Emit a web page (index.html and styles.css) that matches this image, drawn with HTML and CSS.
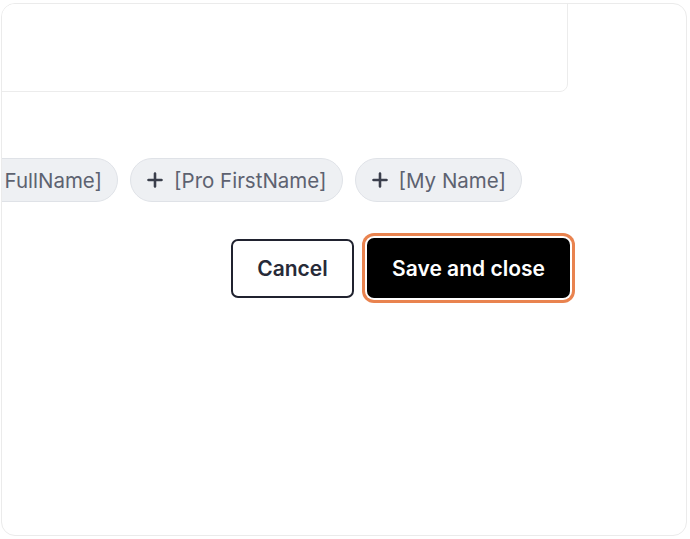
FILE: index.html
```html
<!DOCTYPE html>
<html lang="en">
<head>
<meta charset="utf-8">
<title>Edit message</title>
<link rel="stylesheet" href="styles.css">
</head>
<body>
<div class="card">
  <div class="content">
    <div class="textarea"></div>
    <div class="chips">
      <button class="chip" type="button">
        <svg class="plus" viewBox="0 0 16 16" aria-hidden="true"><path d="M8 1.5v13M1.5 8h13"/></svg>
        <span>[Pro FullName]</span>
      </button>
      <button class="chip" type="button">
        <svg class="plus" viewBox="0 0 16 16" aria-hidden="true"><path d="M8 1.5v13M1.5 8h13"/></svg>
        <span>[Pro FirstName]</span>
      </button>
      <button class="chip" type="button">
        <svg class="plus" viewBox="0 0 16 16" aria-hidden="true"><path d="M8 1.5v13M1.5 8h13"/></svg>
        <span>[My Name]</span>
      </button>
    </div>
    <div class="actions">
      <button class="btn btn-cancel" type="button">Cancel</button>
      <button class="btn btn-save" type="button">Save and close</button>
    </div>
  </div>
</div>
</body>
</html>
```
FILE: styles.css
```css
html, body {
  margin: 0;
  padding: 0;
  background: #ffffff;
}

body {
  font-family: Inter, "Noto Sans", "Liberation Sans", sans-serif;
  padding: 3px 3px 3px 1px;
}

.card {
  box-sizing: border-box;
  width: 686px;
  height: 533px;
  border: 1px solid #ebebeb;
  border-radius: 14px;
  overflow: hidden;
  background: #ffffff;
}

.content {
  display: flex;
  flex-direction: column;
  align-items: flex-end;
  padding-right: 118px;
  margin-left: -300px;
}

.textarea {
  box-sizing: border-box;
  width: 900px;
  height: 110px;
  margin-top: -22px;
  border: 1px solid #ececec;
  border-radius: 8px;
  background: #ffffff;
}

.chips {
  display: flex;
  gap: 12px;
  margin-top: 66px;
  margin-right: 46px;
  white-space: nowrap;
}

.chip {
  display: flex;
  align-items: center;
  gap: 11px;
  height: 44px;
  box-sizing: border-box;
  padding: 0 15px 0 16px;
  border: 1px solid #dfe2e7;
  border-radius: 22px;
  background: #eef0f3;
  color: #5d6270;
  font-family: inherit;
  font-size: 20.5px;
  font-weight: 400;
}

.plus {
  width: 16px;
  height: 16px;
  fill: none;
  stroke: #3b3f4c;
  stroke-width: 2.6;
  stroke-linecap: round;
}

.actions {
  display: flex;
  gap: 13px;
  margin-top: 36px;
  margin-right: -2px;
}

.btn {
  box-sizing: border-box;
  height: 60px;
  border-radius: 7px;
  font-family: inherit;
  font-size: 21px;
  font-weight: 600;
  cursor: pointer;
}

.btn-cancel {
  width: 123px;
  margin-top: 1px;
  height: 59px;
  border: 2px solid #20222f;
  background: #ffffff;
  color: #272a38;
}

.btn-save {
  width: 203px;
  border: none;
  background: #000000;
  color: #ffffff;
  box-shadow: 0 0 0 2px #ffffff, 0 0 0 5px #e9834f;
}
```
